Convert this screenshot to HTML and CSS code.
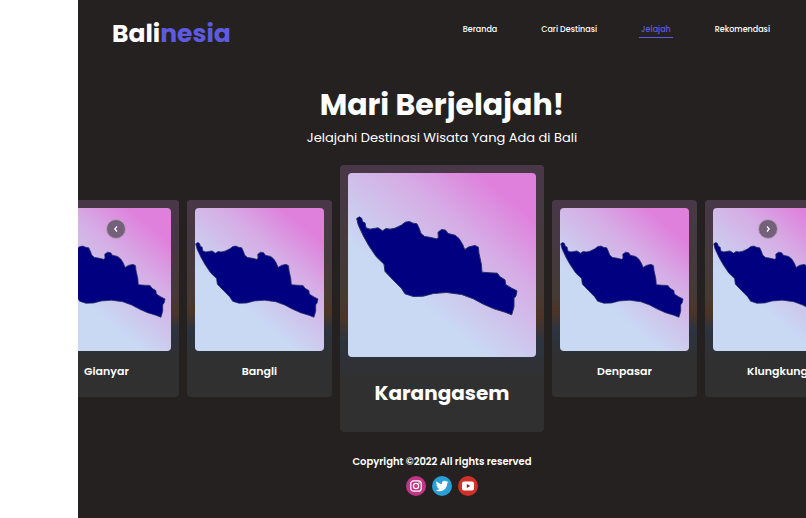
FILE: index.html
```html
<!DOCTYPE html>
<html lang="id">
<head>
  <meta charset="utf-8">
  <meta name="viewport" content="width=device-width, initial-scale=1">
  <title>Balinesia</title>
  <link rel="stylesheet" href="styles.css">
</head>
<body>
  <svg class="sprite" aria-hidden="true">
    <symbol id="map" viewBox="0 0 486 299">
      <path transform="translate(2 2)" d="M0 5 8 0 15 4 18 15 25 18 28 33 40 37 64 33 78 42 88 35 100 37 115 34 134 25 146 16 158 14 169 19 181 21 188 36 193 50 204 59 218 61 240 66 245 62 244 46 255 38 267 40 274 50 295 55 307 65 318 83 324 98 337 90 355 86 365 91 367 110 374 142 376 166 400 168 422 169 430 180 445 189 447 203 465 214 481 222 478 237 472 245 472 270 465 294 445 286 412 276 380 262 350 246 315 233 270 227 230 230 200 238 170 239 145 231 134 214 110 190 85 164 82 142 59 120 36 86 20 57 5 25Z"/>
    </symbol>
  </svg>
  <div class="page">
    <header class="header">
      <a class="logo" href="#">Bali<span class="logo-accent">nesia</span></a>
      <nav class="nav">
        <a href="#">Beranda</a>
        <a href="#">Cari Destinasi</a>
        <a class="active" href="#" aria-current="page">Jelajah</a>
        <a href="#">Rekomendasi</a>
      </nav>
    </header>
    <main>
      <div class="intro">
        <h1>Mari Berjelajah!</h1>
        <p>Jelajahi Destinasi Wisata Yang Ada di Bali</p>
      </div>
      <section class="carousel">
        <div class="track">
          <article class="card">
            <div class="picture"><svg class="map"><use href="#map"/></svg></div>
            <h2>Gianyar</h2>
          </article>
          <article class="card">
            <div class="picture"><svg class="map"><use href="#map"/></svg></div>
            <h2>Bangli</h2>
          </article>
          <article class="card card-main">
            <div class="picture"><svg class="map"><use href="#map"/></svg></div>
            <h2>Karangasem</h2>
          </article>
          <article class="card">
            <div class="picture"><svg class="map"><use href="#map"/></svg></div>
            <h2>Denpasar</h2>
          </article>
          <article class="card">
            <div class="picture"><svg class="map"><use href="#map"/></svg></div>
            <h2>Klungkung</h2>
          </article>
        </div>
        <button class="arrow arrow-prev" type="button" aria-label="Sebelumnya">
          <svg viewBox="0 0 8 8"><path d="M5 1.5 2.8 4 5 6.5"/></svg>
        </button>
        <button class="arrow arrow-next" type="button" aria-label="Berikutnya">
          <svg viewBox="0 0 8 8"><path d="M3 1.5 5.2 4 3 6.5"/></svg>
        </button>
      </section>
    </main>
    <footer class="footer">
      <p>Copyright ©2022 All rights reserved</p>
      <div class="social">
        <a href="#" aria-label="Instagram">
          <svg viewBox="0 0 20 20">
            <circle cx="10" cy="10" r="10" fill="#c13584"/>
            <g fill="none" stroke="#fff" stroke-width="1.2">
              <rect x="4.8" y="4.8" width="10.4" height="10.4" rx="2.8"/>
              <circle cx="10" cy="10" r="2.6"/>
            </g>
            <circle cx="13" cy="7" r=".8" fill="#fff"/>
          </svg>
        </a>
        <a href="#" aria-label="Twitter">
          <svg viewBox="0 0 20 20">
            <circle cx="10" cy="10" r="10" fill="#2a9fd6"/>
            <path fill="#fff" transform="translate(3.7 3.6) scale(.53)" d="M23.95 4.57a10 10 0 0 1-2.82.77 4.96 4.96 0 0 0 2.16-2.72c-.95.55-2 .96-3.13 1.18a4.92 4.92 0 0 0-8.38 4.48C7.69 8.09 4.07 6.13 1.64 3.16a4.92 4.92 0 0 0 1.52 6.57 4.9 4.9 0 0 1-2.23-.61v.06a4.92 4.92 0 0 0 3.95 4.83 5 5 0 0 1-2.21.08 4.94 4.94 0 0 0 4.6 3.42A9.87 9.87 0 0 1 0 19.54a14 14 0 0 0 7.55 2.21c9.05 0 14-7.5 14-13.98l-.02-.64a9.9 9.9 0 0 0 2.42-2.56z"/>
          </svg>
        </a>
        <a href="#" aria-label="YouTube">
          <svg viewBox="0 0 20 20">
            <circle cx="10" cy="10" r="10" fill="#d0302a"/>
            <rect x="4" y="5.6" width="12" height="8.8" rx="2" fill="#fff"/>
            <path d="M8.8 8v4l3.4-2z" fill="#8f2424"/>
          </svg>
        </a>
      </div>
    </footer>
  </div>
</body>
</html>
```
FILE: styles.css
```css
* {
  box-sizing: border-box;
}

body {
  margin: 0;
  padding-left: 78px;
  background: #fff;
  color: #fff;
  font-family: Poppins, Inter, "Open Sans", sans-serif;
}

h1,
h2,
p {
  margin: 0;
}

a {
  color: inherit;
  text-decoration: none;
}

.sprite {
  display: none;
}

.page {
  min-height: 100vh;
  background: #242120;
}

.header {
  display: flex;
  align-items: center;
  justify-content: space-between;
  padding: 16px 34px 0;
}

.logo {
  font-size: 25px;
  font-weight: 700;
  line-height: 36px;
}

.logo-accent {
  color: #5f5be0;
}

.nav {
  display: flex;
  gap: 40px;
  padding-bottom: 8px;
  font-size: 8px;
  font-weight: 500;
  line-height: 14px;
}

.nav a {
  padding: 0 2px;
  border-bottom: 1px solid transparent;
}

.nav .active {
  border-color: #5f5be0;
  color: #5f5be0;
}

.intro {
  padding-top: 32px;
  text-align: center;
}

.intro h1 {
  font-size: 30px;
  font-weight: 700;
  line-height: 42px;
}

.intro p {
  font-size: 13px;
  line-height: 24px;
}

.carousel {
  position: relative;
  margin-top: 15px;
  overflow: hidden;
}

.track {
  display: flex;
  align-items: center;
  justify-content: center;
  gap: 8px;
}

.card {
  flex: none;
  width: 145px;
  padding: 8px;
  border-radius: 4px;
  background: linear-gradient(#493848, #45393f 25%, #463a34 48%, #4c3526 57%, #2c3440 66%, #303030 80%);
  text-align: center;
}

.card-main {
  width: 204px;
}

.picture {
  height: 143px;
  padding-top: 34px;
  border-radius: 4px;
  overflow: hidden;
  background: linear-gradient(40deg, #c9d8f3 34%, #cfc2eb 50%, #d6ace5 66%, #df80dc 86%);
}

.card-main .picture {
  height: 184px;
  padding: 43px 0 0 8px;
}

.map {
  display: block;
  width: 124px;
  height: 76px;
  fill: #000080;
  stroke: #253064;
  stroke-width: 3px;
  stroke-linejoin: round;
}

.card-main .map {
  width: 162px;
  height: 100px;
}

.card h2 {
  padding: 8px 0 6px;
  font-size: 11px;
  font-weight: 600;
  line-height: 24px;
}

.card-main h2 {
  padding: 20px 0 15px;
  font-size: 20px;
  font-weight: 700;
  line-height: 32px;
}

.arrow {
  position: absolute;
  top: 54px;
  display: grid;
  place-items: center;
  width: 20px;
  height: 20px;
  padding: 0;
  border: 1px solid #b9a0c0;
  border-radius: 50%;
  background: #75607a;
}

.arrow-prev {
  left: 28px;
}

.arrow-next {
  right: 28px;
}

.arrow svg {
  width: 8px;
  height: 8px;
  fill: none;
  stroke: #fff;
  stroke-width: 1.2px;
}

.footer {
  padding: 22px 0 20px;
  text-align: center;
}

.footer p {
  font-size: 10px;
  font-weight: 600;
  line-height: 16px;
}

.social {
  display: flex;
  justify-content: center;
  gap: 6px;
  padding-top: 6px;
}

.social svg {
  display: block;
  width: 20px;
  height: 20px;
}
```
